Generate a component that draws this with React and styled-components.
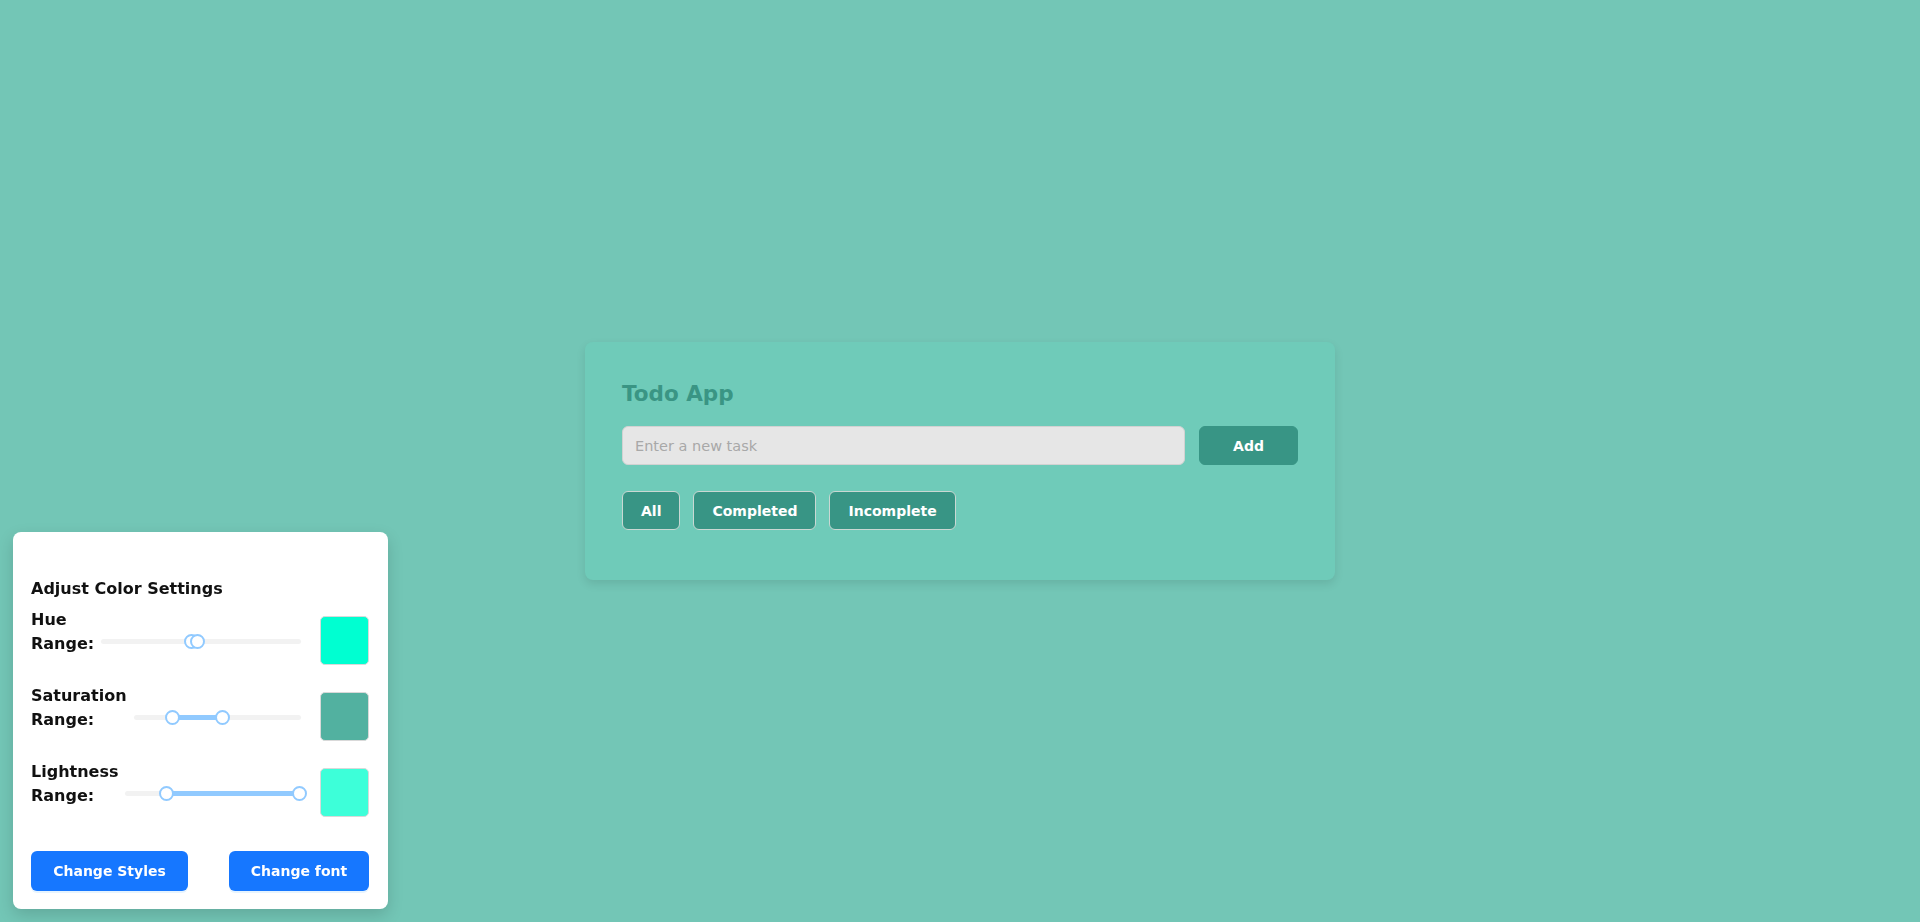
import React, { useState } from 'react';
import styled, { createGlobalStyle } from 'styled-components';

const GlobalStyle = createGlobalStyle`
  html, body {
    margin: 0;
    padding: 0;
  }
  body {
    background-color: #73c6b6;
    font-family: "DejaVu Sans", "Liberation Sans", sans-serif;
  }
`;

const Page = styled.div`
  min-height: 100vh;
  display: flex;
  align-items: center;
  justify-content: center;
`;

const TodoCard = styled.div`
  width: 750px;
  box-sizing: border-box;
  padding: 37px 37px 50px;
  background-color: #6fcbb9;
  border-radius: 8px;
  box-shadow: 0 4px 10px rgba(0, 0, 0, 0.1);
`;

const Title = styled.h2`
  margin: 0 0 17px;
  font-size: 21.5px;
  font-weight: 700;
  line-height: 30px;
  color: #3a9584;
`;

const InputRow = styled.div`
  display: flex;
  gap: 14px;
`;

const TaskInput = styled.input`
  flex: 1;
  height: 39px;
  box-sizing: border-box;
  padding: 0 12px;
  border: 1px solid #d2d2d2;
  border-radius: 6px;
  background-color: #e6e6e6;
  font-family: inherit;
  font-size: 14.5px;
  outline: none;
  &::placeholder {
    color: #a8a8a8;
  }
`;

const Button = styled.button`
  height: 39px;
  padding: 0 18px;
  min-width: ${(p) => p.$min || 0}px;
  border: 1px solid ${(p) => (p.$outlined ? '#c9d8d3' : '#389585')};
  border-radius: 6px;
  background-color: #389585;
  color: #fff;
  font-family: inherit;
  font-size: 14px;
  font-weight: 700;
  cursor: pointer;
`;

const FilterRow = styled.div`
  display: flex;
  gap: 13px;
  margin-top: 26px;
`;

const Panel = styled.div`
  position: fixed;
  left: 13px;
  bottom: 13px;
  width: 375px;
  box-sizing: border-box;
  padding: 45px 19px 18px 18px;
  background: #fff;
  border-radius: 8px;
  box-shadow: 0 6px 16px rgba(0, 0, 0, 0.15);
`;

const PanelTitle = styled.h3`
  margin: 0 0 15px;
  font-size: 16px;
  font-weight: 700;
  line-height: 24px;
  color: #111;
`;

const SettingRow = styled.div`
  display: flex;
  align-items: center;
  margin-bottom: 27px;
  &:last-of-type {
    margin-bottom: 0;
  }
`;

const Label = styled.div`
  width: min-content;
  margin-top: -17px;
  font-size: 16px;
  font-weight: 700;
  line-height: 24px;
  color: #111;
`;

const SliderBox = styled.div`
  position: relative;
  flex: 1;
  height: 16px;
  margin-left: 7px;
`;

const Rail = styled.div`
  position: absolute;
  left: 0;
  right: 0;
  top: 6px;
  height: 5px;
  border-radius: 3px;
  background: #f2f2f2;
`;

const Track = styled.div`
  position: absolute;
  top: 6px;
  height: 5px;
  border-radius: 3px;
  background: #91caff;
`;

const Handle = styled.div`
  position: absolute;
  top: 1px;
  width: 11px;
  height: 11px;
  margin-left: -7px;
  border: 2px solid #91caff;
  border-radius: 50%;
  background: #fff;
`;

const Swatch = styled.div`
  width: 49px;
  height: 49px;
  box-sizing: border-box;
  margin-left: 19px;
  flex-shrink: 0;
  border: 1px solid #d9d9d9;
  border-radius: 5px;
  background-color: ${(p) => p.$color};
`;

const ButtonRow = styled.div`
  display: flex;
  justify-content: space-between;
  margin-top: 34px;
`;

const PrimaryButton = styled.button`
  height: 40px;
  width: ${(p) => p.$width}px;
  border: none;
  border-radius: 6px;
  background-color: #1677ff;
  color: #fff;
  font-family: inherit;
  font-size: 14px;
  font-weight: 700;
  box-shadow: 0 2px 0 rgba(5, 145, 255, 0.1);
  cursor: pointer;
`;

const RangeSlider = ({ from, to }) => (
  <SliderBox>
    <Rail />
    <Track style={{ left: `${from}%`, width: `${to - from}%` }} />
    <Handle style={{ left: `${from}%` }} />
    <Handle style={{ left: `${to}%` }} />
  </SliderBox>
);

const settings = [
  { name: 'Hue', from: 45, to: 48, color: '#00ffd1' },
  { name: 'Saturation', from: 23, to: 53, color: '#52b1a0' },
  { name: 'Lightness', from: 23, to: 99, color: '#3dffd9' },
];

export default function App() {
  const [task, setTask] = useState('');

  return (
    <Page>
      <GlobalStyle />
      <TodoCard>
        <Title>Todo App</Title>
        <InputRow>
          <TaskInput
            value={task}
            onChange={(e) => setTask(e.target.value)}
            placeholder="Enter a new task"
          />
          <Button $min={99}>Add</Button>
        </InputRow>
        <FilterRow>
          <Button $outlined $min={58}>All</Button>
          <Button $outlined>Completed</Button>
          <Button $outlined>Incomplete</Button>
        </FilterRow>
      </TodoCard>

      <Panel>
        <PanelTitle>Adjust Color Settings</PanelTitle>
        {settings.map((s) => (
          <SettingRow key={s.name}>
            <Label>{s.name} Range:</Label>
            <RangeSlider from={s.from} to={s.to} />
            <Swatch $color={s.color} />
          </SettingRow>
        ))}
        <ButtonRow>
          <PrimaryButton $width={157}>Change Styles</PrimaryButton>
          <PrimaryButton $width={140}>Change font</PrimaryButton>
        </ButtonRow>
      </Panel>
    </Page>
  );
}
